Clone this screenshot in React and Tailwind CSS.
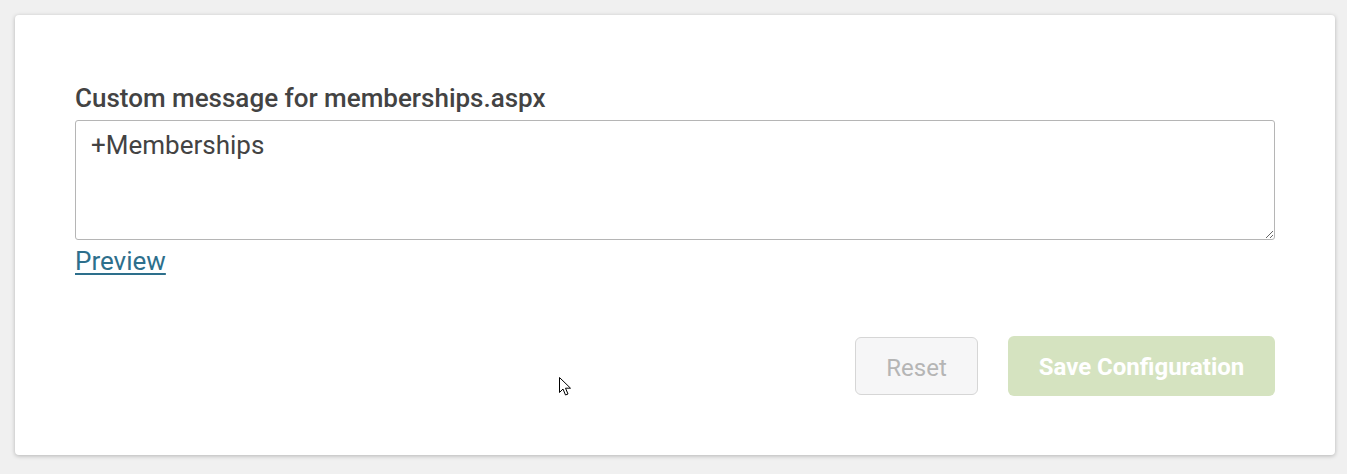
import React from "react";

export default function App() {
  return (
    <div
      className="relative min-h-[474px] w-full bg-[#f0f0f0] p-[15px]"
      style={{ fontFamily: 'Roboto, "Noto Sans", sans-serif' }}
    >
      <div className="flex h-[440px] w-[1320px] flex-col rounded-[4px] bg-white px-[60px] pt-[69px] pb-[59px] shadow-[0_1px_4px_rgba(0,0,0,0.25)]">
        <label className="block text-[26px] leading-[28px] font-medium text-[#434343]">
          Custom message for memberships.aspx
        </label>
        <textarea
          className="mt-[8px] block h-[120px] w-full resize-y rounded-[3px] border border-[#b5b5b5] px-[15px] pt-[9px] text-[26px] leading-[30px] text-[#434343] outline-none"
          defaultValue="+Memberships"
        />
        <a
          href="#"
          className="mt-[6px] self-start text-[26px] leading-[30px] text-[#2d6f8c] underline underline-offset-[3px]"
        >
          Preview
        </a>
        <div className="mt-auto flex items-center justify-end gap-[30px]">
          <button className="h-[58px] w-[123px] rounded-[6px] border border-[#d6d6d6] bg-[#f6f6f7] pt-[3px] text-[24px] text-[#b5b5b5]">
            Reset
          </button>
          <button className="h-[60px] w-[267px] rounded-[6px] bg-[#d5e3c0] pt-[2px] text-[24px] font-bold text-white">
            Save Configuration
          </button>
        </div>
      </div>
      <svg
        className="pointer-events-none absolute left-[559px] top-[377px]"
        width="13"
        height="20"
        viewBox="0 0 13 20"
      >
        <path
          d="M0.5 0.5 L0.5 15.5 L4 12 L6.5 18 L9 17 L6.5 11.2 L11.5 11.2 Z"
          fill="white"
          stroke="black"
          strokeWidth="1"
          strokeLinejoin="miter"
        />
      </svg>
    </div>
  );
}
